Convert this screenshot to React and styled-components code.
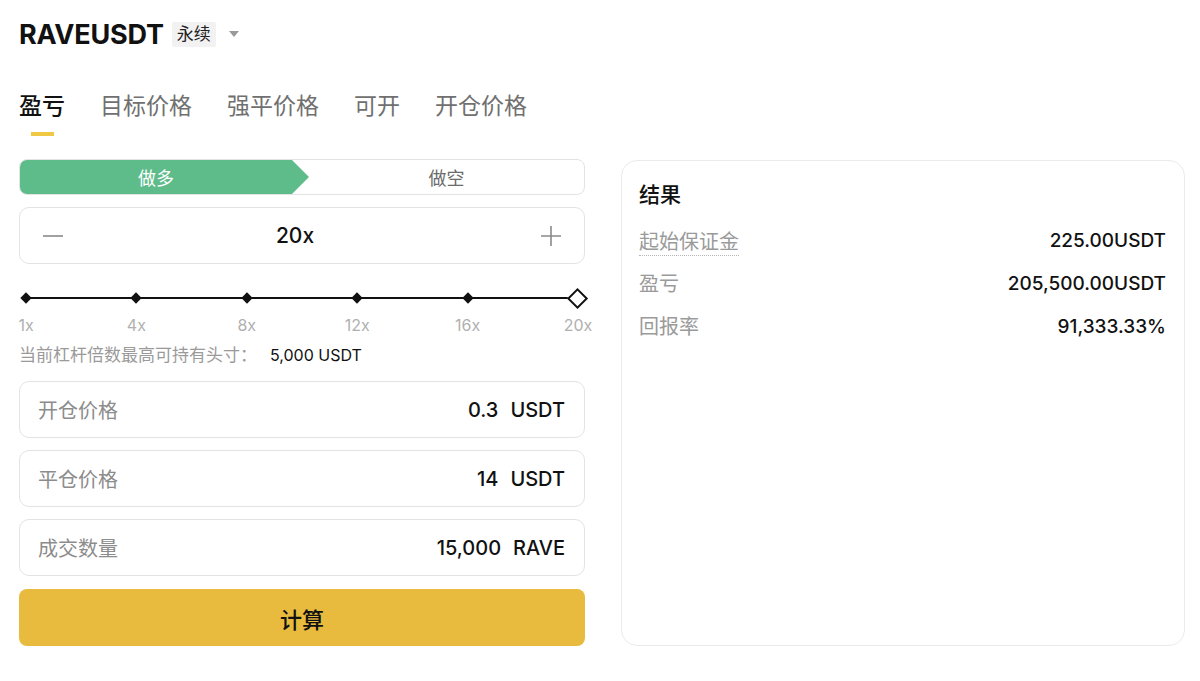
import React, { useState } from 'react'
import styled, { createGlobalStyle, css } from 'styled-components'

const GlobalStyle = createGlobalStyle`
  * { box-sizing: border-box; }
  body {
    margin: 0;
    background: #fff;
    font-family: Inter, "Noto Sans CJK SC", sans-serif;
    color: #1e2026;
  }
`

const Page = styled.div`
  padding: 18px 16px 0 19px;
`

const Header = styled.div`
  display: flex;
  align-items: center;
  height: 32px;
`

const Symbol = styled.h1`
  margin: 0;
  font-size: 27px;
  font-weight: 700;
  letter-spacing: -0.2px;
  color: #111;
`

const Tag = styled.span`
  margin-left: 8px;
  padding: 1px 5px;
  font-size: 17px;
  line-height: 23px;
  background: #f2f2f2;
  border-radius: 2px;
  color: #222;
`

const Caret = styled.span`
  margin-left: 13px;
  width: 0;
  height: 0;
  border-left: 5px solid transparent;
  border-right: 5px solid transparent;
  border-top: 6px solid #9a9a9a;
`

const Tabs = styled.nav`
  display: flex;
  gap: 35px;
  margin-top: 41px;
`

const Tab = styled.div`
  display: flex;
  flex-direction: column;
  align-items: center;
  font-size: 23px;
  line-height: 30px;
  color: #707070;
  cursor: pointer;

  &::after {
    content: '';
    width: 23px;
    height: 4px;
    margin-top: 11px;
    background: transparent;
  }

  ${({ active }) =>
    active &&
    css`
      color: #111;
      font-weight: 500;
      &::after {
        background: #f0c944;
      }
    `}
`

const Content = styled.div`
  display: grid;
  grid-template-columns: 566px 564px;
  gap: 36px;
  margin-top: 23px;
`

const Column = styled.div`
  display: flex;
  flex-direction: column;
`

const Toggle = styled.div`
  position: relative;
  display: flex;
  height: 36px;
  border: 1px solid #e3e3e3;
  border-radius: 8px;
  overflow: hidden;
`

const Side = styled.div`
  display: flex;
  align-items: center;
  justify-content: center;
  font-size: 18px;
  cursor: pointer;
  ${({ active }) =>
    active
      ? css`
          width: 290px;
          margin: -1px 0 -1px -1px;
          color: #fff;
          background: #5ebb8a;
          clip-path: polygon(0 0, 272px 0, 290px 50%, 272px 100%, 0 100%);
          padding-right: 16px;
        `
      : css`
          flex: 1;
          color: #6b6b6b;
        `}
`

const Stepper = styled.div`
  display: flex;
  align-items: center;
  justify-content: space-between;
  height: 57px;
  margin-top: 12px;
  padding: 0 22px;
  border: 1px solid #e3e3e3;
  border-radius: 10px;
`

const StepButton = styled.button`
  border: none;
  background: none;
  padding: 0;
  width: 22px;
  height: 22px;
  display: flex;
  align-items: center;
  justify-content: center;
  cursor: pointer;
`

const Leverage = styled.div`
  margin-right: 14px;
  font-size: 21px;
  font-weight: 500;
  color: #111;
`

const Slider = styled.div`
  margin-top: 27px;
  padding: 0 7px;
`

const Track = styled.div`
  position: relative;
  height: 14px;
  display: flex;
  align-items: center;
  justify-content: space-between;

  &::before {
    content: '';
    position: absolute;
    left: 0;
    right: 0;
    top: 6px;
    height: 2px;
    background: #111;
  }
`

const Dot = styled.span`
  position: relative;
  width: 8px;
  height: 8px;
  margin: 0 -4px;
  background: #111;
  transform: rotate(45deg);

  ${({ current }) =>
    current &&
    css`
      width: 15px;
      height: 15px;
      margin: 0 -7.5px;
      background: #fff;
      border: 2px solid #111;
    `}
`

const Marks = styled.div`
  display: flex;
  justify-content: space-between;
  margin-top: 12px;
`

const Mark = styled.span`
  width: 0;
  display: flex;
  justify-content: center;
  font-size: 16px;
  line-height: 16px;
  color: #b0b0b0;
  white-space: nowrap;
`

const Note = styled.div`
  margin-top: 12px;
  font-size: 17px;
  line-height: 20px;
  color: #9a9a9a;

  b {
    margin-left: 13px;
    font-size: 16px;
    font-weight: 400;
    color: #111;
  }
`

const Field = styled.div`
  display: flex;
  align-items: center;
  justify-content: space-between;
  height: 57px;
  margin-top: ${({ first }) => (first ? '16px' : '12px')};
  padding: 0 19px 0 18px;
  border: 1px solid #e3e3e3;
  border-radius: 10px;
`

const FieldLabel = styled.span`
  font-size: 20px;
  color: #8c8c8c;
`

const FieldValue = styled.span`
  display: flex;
  gap: 12px;
  font-size: 20px;
  font-weight: 500;
  color: #111;
`

const Submit = styled.button`
  height: 57px;
  margin-top: 13px;
  border: none;
  border-radius: 8px;
  background: #e8bb3f;
  font-family: inherit;
  font-size: 22px;
  font-weight: 500;
  color: #111;
  cursor: pointer;
`

const Card = styled.section`
  height: 486px;
  margin-top: 1px;
  padding: 19px 18px 19px 17px;
  border: 1px solid #ebebeb;
  border-radius: 16px;
`

const CardTitle = styled.h2`
  margin: 0 0 9px;
  font-size: 21px;
  line-height: 30px;
  font-weight: 500;
  color: #111;
`

const ResultRow = styled.div`
  display: flex;
  align-items: center;
  justify-content: space-between;
  height: 43px;
`

const ResultLabel = styled.span`
  font-size: 20px;
  line-height: 26px;
  color: #9a9a9a;
  ${({ dotted }) =>
    dotted &&
    css`
      margin-top: 4px;
      border-bottom: 1px dotted #b5b5b5;
    `}
`

const ResultValue = styled.span`
  font-size: 19px;
  font-weight: 500;
  color: #111;
`

const tabs = ['盈亏', '目标价格', '强平价格', '可开', '开仓价格']
const marks = ['1x', '4x', '8x', '12x', '16x', '20x']
const fields = [
  { label: '开仓价格', value: '0.3', unit: 'USDT' },
  { label: '平仓价格', value: '14', unit: 'USDT' },
  { label: '成交数量', value: '15,000', unit: 'RAVE' }
]
const results = [
  { label: '起始保证金', value: '225.00USDT', dotted: true },
  { label: '盈亏', value: '205,500.00USDT' },
  { label: '回报率', value: '91,333.33%' }
]

const App = () => {
  const [tab, setTab] = useState(0)
  const [side, setSide] = useState('long')

  return (
    <Page>
      <GlobalStyle />
      <Header>
        <Symbol>RAVEUSDT</Symbol>
        <Tag>永续</Tag>
        <Caret />
      </Header>

      <Tabs>
        {tabs.map((t, i) => (
          <Tab key={t} active={i === tab} onClick={() => setTab(i)}>
            {t}
          </Tab>
        ))}
      </Tabs>

      <Content>
        <Column>
          <Toggle>
            <Side active={side === 'long'} onClick={() => setSide('long')}>
              做多
            </Side>
            <Side active={side === 'short'} onClick={() => setSide('short')}>
              做空
            </Side>
          </Toggle>

          <Stepper>
            <StepButton aria-label="decrease">
              <svg width="22" height="22" viewBox="0 0 22 22">
                <path d="M1 11h20" stroke="#8a8a8a" strokeWidth="1.6" />
              </svg>
            </StepButton>
            <Leverage>20x</Leverage>
            <StepButton aria-label="increase">
              <svg width="22" height="22" viewBox="0 0 22 22">
                <path d="M1 11h20M11 1v20" stroke="#8a8a8a" strokeWidth="1.6" />
              </svg>
            </StepButton>
          </Stepper>

          <Slider>
            <Track>
              {marks.map((m, i) => (
                <Dot key={m} current={i === marks.length - 1} />
              ))}
            </Track>
            <Marks>
              {marks.map(m => (
                <Mark key={m}>{m}</Mark>
              ))}
            </Marks>
          </Slider>

          <Note>
            当前杠杆倍数最高可持有头寸：<b>5,000 USDT</b>
          </Note>

          {fields.map((f, i) => (
            <Field key={f.label} first={i === 0}>
              <FieldLabel>{f.label}</FieldLabel>
              <FieldValue>
                <span>{f.value}</span>
                <span>{f.unit}</span>
              </FieldValue>
            </Field>
          ))}

          <Submit>计算</Submit>
        </Column>

        <Card>
          <CardTitle>结果</CardTitle>
          {results.map(r => (
            <ResultRow key={r.label}>
              <ResultLabel dotted={r.dotted}>{r.label}</ResultLabel>
              <ResultValue>{r.value}</ResultValue>
            </ResultRow>
          ))}
        </Card>
      </Content>
    </Page>
  )
}

export default App
